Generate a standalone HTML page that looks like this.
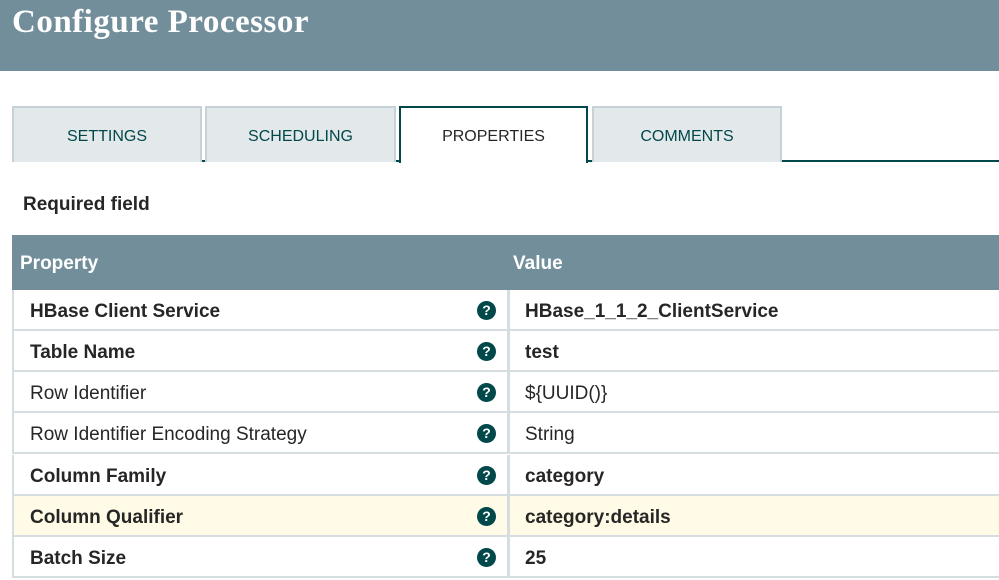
<!DOCTYPE html>
<html><head><style>
*{margin:0;padding:0;box-sizing:border-box}
body{width:999px;height:580px;overflow:hidden;background:#fff;font-family:"Liberation Sans",sans-serif;position:relative}
.hdr{position:absolute;left:0;top:0;width:999px;height:71px;background:#728e9b}
.hdr h1{position:absolute;left:12px;top:4px;font-family:"Liberation Serif",serif;font-weight:bold;font-size:33px;color:#fff;letter-spacing:0.5px}
.tab{position:absolute;top:106px;height:56px;background:#e3e8eb;border:2px solid #c7d2d7;border-bottom:none;color:#004849;font-size:16px;text-align:center;line-height:58px}
.tab.act{background:#fff;border:2px solid #004849;border-bottom:none;color:#262626;height:57px}
.line{position:absolute;top:160px;left:12px;width:987px;height:2px;background:#004849}
.req{position:absolute;left:23px;top:194px;font-size:19px;font-weight:bold;color:#262626}
.th{position:absolute;left:12px;top:235px;width:987px;height:55px;background:#728e9b;color:#fff;font-weight:bold;font-size:19px}
.th span{position:absolute;top:18px}
.row{position:absolute;left:12px;width:987px;height:41px;border-bottom:2px solid #d5dde1;border-left:2px solid #d5dde1;font-size:19px;color:#262626}
.row .n{position:absolute;left:16px;top:11px}
.row .v{position:absolute;left:511px;top:11px}
.row .d{position:absolute;left:493px;top:0;width:3px;height:41px;background:#d5dde1}
.row .q{position:absolute;left:463px;top:11px;width:19px;height:19px;border-radius:50%;background:#004849;color:#fff;font-size:14px;font-weight:bold;text-align:center;line-height:19px}
.b{font-weight:bold}
</style></head><body>
<div class="hdr"><h1>Configure Processor</h1></div>
<div class="line"></div>
<div class="tab" style="left:12px;width:190px">SETTINGS</div>
<div class="tab" style="left:205px;width:191px">SCHEDULING</div>
<div class="tab act" style="left:399px;width:189px">PROPERTIES</div>
<div class="tab" style="left:592px;width:190px">COMMENTS</div>
<div class="req">Required field</div>
<div class="th"><span style="left:8px">Property</span><span style="left:501px">Value</span></div>
<div class="row b" style="top:290px"><span class="n">HBase Client Service</span><span class="q">?</span><span class="d"></span><span class="v">HBase_1_1_2_ClientService</span></div>
<div class="row b" style="top:331px"><span class="n">Table Name</span><span class="q">?</span><span class="d"></span><span class="v">test</span></div>
<div class="row" style="top:372px"><span class="n">Row Identifier</span><span class="q">?</span><span class="d"></span><span class="v">${UUID()}</span></div>
<div class="row" style="top:413px"><span class="n">Row Identifier Encoding Strategy</span><span class="q">?</span><span class="d"></span><span class="v">String</span></div>
<div class="row b" style="top:455px"><span class="n">Column Family</span><span class="q">?</span><span class="d"></span><span class="v">category</span></div>
<div class="row b" style="top:496px;background:#fffbe6"><span class="n">Column Qualifier</span><span class="q">?</span><span class="d"></span><span class="v">category:details</span></div>
<div class="row b" style="top:537px"><span class="n">Batch Size</span><span class="q">?</span><span class="d"></span><span class="v">25</span></div>
</body></html>
